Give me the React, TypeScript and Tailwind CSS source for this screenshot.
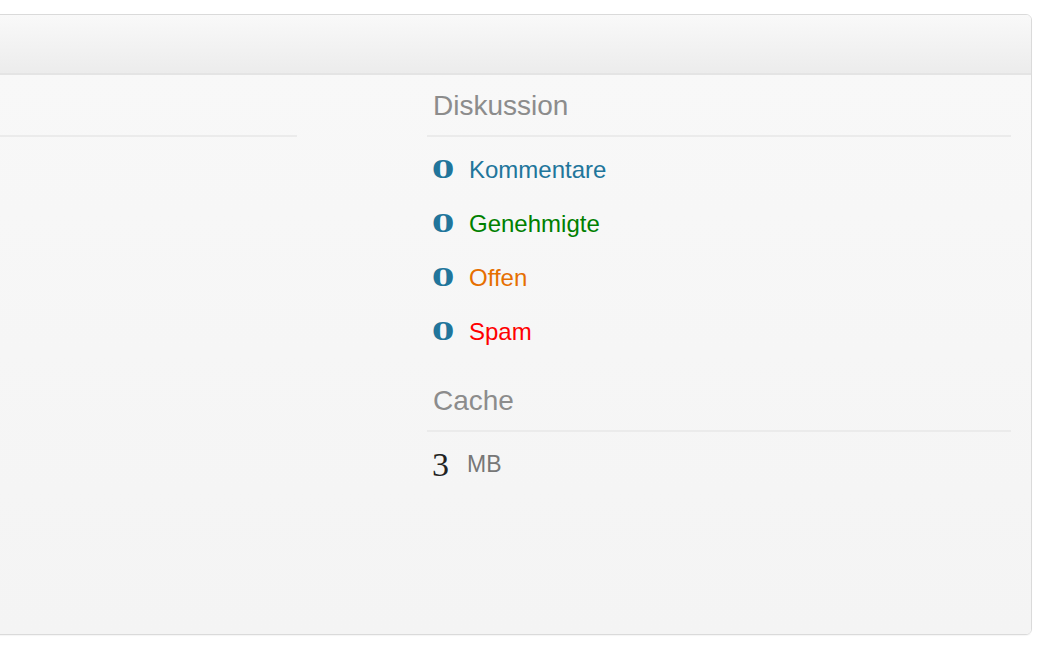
import React from "react";

const rows = [
  { label: "Kommentare", color: "text-[#21759b]" },
  { label: "Genehmigte", color: "text-[#008000]" },
  { label: "Offen", color: "text-[#e66f00]" },
  { label: "Spam", color: "text-[#ff0000]" },
];

function Zero() {
  return (
    <span className="inline-block w-[37px] align-baseline">
      <span className="inline-block origin-left scale-x-[1.28] font-['DejaVu_Serif',serif] text-[25px] font-bold leading-none text-[#21759b]">
        0
      </span>
    </span>
  );
}

export default function App() {
  return (
    <div className="min-h-[651px] bg-white pt-[14px] font-['Liberation_Sans',Arial,sans-serif]">
      <div className="ml-[-21px] flex h-[621px] w-[1053px] flex-col overflow-hidden rounded-[6px] border border-[#dadada] shadow-[0_1px_1px_rgba(0,0,0,0.04)]">
        <div className="h-[60px] shrink-0 border-b-2 border-[#e4e4e4] bg-gradient-to-b from-[#f9f9f9] to-[#ececec]" />
        <div className="flex flex-1 bg-gradient-to-b from-[#f8f8f8] to-[#f4f4f4] pl-[20px] pr-[20px]">
          <div className="w-[297px] shrink-0">
            <div className="h-[62px] border-b-2 border-[#ebebeb]" />
          </div>
          <div className="ml-[130px] flex-1">
            <h3 className="border-b-2 border-[#ebebeb] pb-[13px] pl-[6px] pt-[15px] text-[28px] font-normal leading-[32px] text-[#8c8c8c]">
              Diskussion
            </h3>
            <div className="mt-[6px]">
              {rows.map((r) => (
                <div key={r.label} className="h-[54px] whitespace-nowrap pl-[5px] leading-[54px]">
                  <Zero />
                  <span className={`text-[24px] ${r.color}`}>{r.label}</span>
                </div>
              ))}
            </div>
            <h3 className="mt-[26px] border-b-2 border-[#ebebeb] pb-[13px] pl-[6px] text-[28px] font-normal leading-[32px] text-[#8c8c8c]">
              Cache
            </h3>
            <div className="mt-[5px] h-[54px] whitespace-nowrap pl-[5px] leading-[54px]">
              <span className="inline-block w-[35px] align-baseline">
                <span className="relative top-[4px] font-['Liberation_Serif',serif] text-[34px] leading-none text-[#222]">
                  3
                </span>
              </span>
              <span className="text-[23px] text-[#777]">MB</span>
            </div>
          </div>
        </div>
      </div>
    </div>
  );
}
